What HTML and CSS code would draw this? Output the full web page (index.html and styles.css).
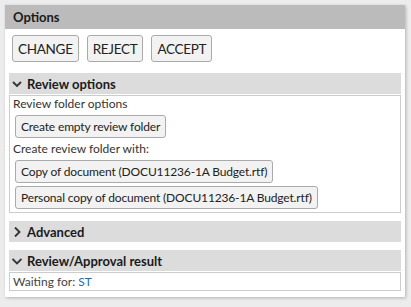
FILE: index.html
```html
<!DOCTYPE html>
<html lang="en">
<head>
    <meta charset="UTF-8">
    <meta name="viewport" content="width=device-width, initial-scale=1.0">
    <title>Options</title>
    <link rel="stylesheet" href="styles.css">
</head>
<body>
    <div class="panel">
        <div class="panel-title">Options</div>

        <div class="actions">
            <button class="big-btn">CHANGE</button>
            <button class="big-btn">REJECT</button>
            <button class="big-btn">ACCEPT</button>
        </div>

        <div class="section">
            <div class="section-head">
                <svg class="chev" viewBox="0 0 10 10"><path d="M1 3 L5 7 L9 3" /></svg>
                <span>Review options</span>
            </div>
            <div class="section-body">
                <div class="line">Review folder options</div>
                <button class="btn">Create empty review folder</button>
                <div class="line">Create review folder with:</div>
                <button class="btn">Copy of document (DOCU11236-1A Budget.rtf)</button>
                <button class="btn">Personal copy of document (DOCU11236-1A Budget.rtf)</button>
            </div>
        </div>

        <div class="section">
            <div class="section-head">
                <svg class="chev" viewBox="0 0 10 10"><path d="M3 0.5 L7.5 5 L3 9.5" /></svg>
                <span>Advanced</span>
            </div>
        </div>

        <div class="section last">
            <div class="section-head">
                <svg class="chev" viewBox="0 0 10 10"><path d="M0.5 3 L5 7.5 L9.5 3" /></svg>
                <span>Review/Approval result</span>
            </div>
            <div class="section-body result">
                Waiting for: <span class="who">ST</span>
            </div>
        </div>
    </div>
</body>
</html>
```

FILE: styles.css
```css
body {
    margin: 0;
    padding: 5px;
    background-color: #ececec;
    font-family: Lato, "Open Sans", Arial, sans-serif;
    color: #222;
}
.panel {
    width: 400px;
    background-color: #fff;
    box-shadow: 1px 1px 3px rgba(0, 0, 0, 0.25);
    padding-bottom: 6px;
}
.panel-title {
    background-color: #bbb;
    height: 24px;
    line-height: 24px;
    padding-left: 8px;
    font-size: 13px;
    font-weight: bold;
    color: #1a1a1a;
}
.actions {
    display: flex;
    gap: 8px;
    padding: 6px 7px 11px;
}
.big-btn {
    height: 27px;
    padding: 0 5px;
    font-family: inherit;
    font-size: 13.5px;
    letter-spacing: -0.3px;
    color: #222;
    background-color: #f2f2f2;
    border: 1px solid #aaa;
    border-radius: 3px;
}
.section {
    margin: 0 4px 8px;
}
.section.last {
    margin-bottom: 0;
}
.section-head {
    display: flex;
    align-items: center;
    gap: 5px;
    height: 21px;
    padding-left: 3px;
    background-color: #dcdcdc;
    font-size: 13px;
    font-weight: bold;
    color: #1a1a1a;
}
.chev {
    width: 10px;
    height: 10px;
    fill: none;
    stroke: #333;
    stroke-width: 1.9;
}
.section-body {
    display: flex;
    flex-direction: column;
    align-items: flex-start;
    gap: 3px;
    margin-top: 1px;
    padding: 0 3px 3px;
    border: 1px solid #ccc;
    font-size: 12px;
    color: #333;
}
.line {
    line-height: 16px;
}
.btn {
    height: 23px;
    margin-left: 2px;
    padding: 0 5px;
    font-family: inherit;
    font-size: 12px;
    letter-spacing: -0.15px;
    color: #222;
    background-color: #f2f2f2;
    border: 1px solid #aaa;
    border-radius: 3px;
}
.result {
    display: block;
    padding: 0 3px;
    line-height: 17px;
    font-size: 12px;
    color: #444;
}
.who {
    color: #1b6db4;
}
```
